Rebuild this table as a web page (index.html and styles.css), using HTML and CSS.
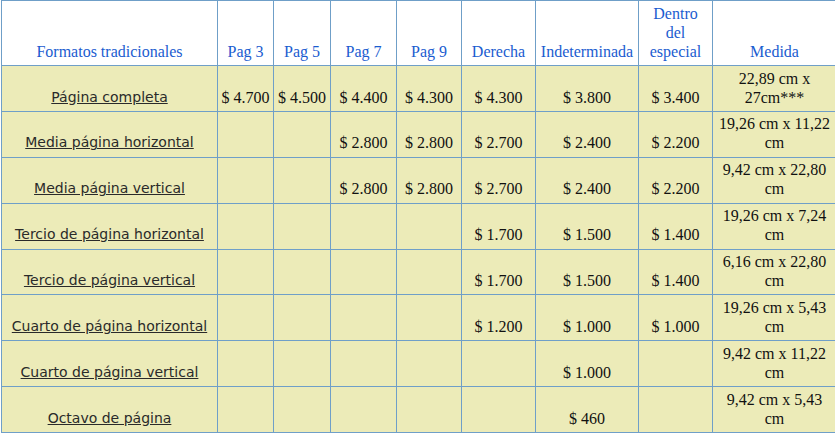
FILE: index.html
```html
<!DOCTYPE html>
<html lang="es">
<head>
<meta charset="utf-8">
<title>Formatos tradicionales</title>
<link rel="stylesheet" href="styles.css">
</head>
<body>
<table class="tarifas">
  <colgroup>
    <col class="c-formato">
    <col class="c-p3">
    <col class="c-p5">
    <col class="c-p7">
    <col class="c-p9">
    <col class="c-der">
    <col class="c-ind">
    <col class="c-dentro">
    <col class="c-medida">
  </colgroup>
  <thead>
    <tr>
      <th>Formatos tradicionales</th>
      <th>Pag 3</th>
      <th>Pag 5</th>
      <th>Pag 7</th>
      <th>Pag 9</th>
      <th>Derecha</th>
      <th>Indeterminada</th>
      <th>Dentro<br>del<br>especial</th>
      <th>Medida</th>
    </tr>
  </thead>
  <tbody>
    <tr>
      <td class="formato"><a href="#">Página completa</a></td>
      <td>$ 4.700</td><td>$ 4.500</td><td>$ 4.400</td><td>$ 4.300</td><td>$ 4.300</td><td>$ 3.800</td><td>$ 3.400</td>
      <td>22,89 cm x 27cm***</td>
    </tr>
    <tr>
      <td class="formato"><a href="#">Media página horizontal</a></td>
      <td></td><td></td><td>$ 2.800</td><td>$ 2.800</td><td>$ 2.700</td><td>$ 2.400</td><td>$ 2.200</td>
      <td>19,26 cm x 11,22 cm</td>
    </tr>
    <tr>
      <td class="formato"><a href="#">Media página vertical</a></td>
      <td></td><td></td><td>$ 2.800</td><td>$ 2.800</td><td>$ 2.700</td><td>$ 2.400</td><td>$ 2.200</td>
      <td>9,42 cm x 22,80 cm</td>
    </tr>
    <tr>
      <td class="formato"><a href="#">Tercio de página horizontal</a></td>
      <td></td><td></td><td></td><td></td><td>$ 1.700</td><td>$ 1.500</td><td>$ 1.400</td>
      <td>19,26 cm x 7,24 cm</td>
    </tr>
    <tr>
      <td class="formato"><a href="#">Tercio de página vertical</a></td>
      <td></td><td></td><td></td><td></td><td>$ 1.700</td><td>$ 1.500</td><td>$ 1.400</td>
      <td>6,16 cm x 22,80 cm</td>
    </tr>
    <tr>
      <td class="formato"><a href="#">Cuarto de página horizontal</a></td>
      <td></td><td></td><td></td><td></td><td>$ 1.200</td><td>$ 1.000</td><td>$ 1.000</td>
      <td>19,26 cm x 5,43 cm</td>
    </tr>
    <tr>
      <td class="formato"><a href="#">Cuarto de página vertical</a></td>
      <td></td><td></td><td></td><td></td><td></td><td>$ 1.000</td><td></td>
      <td>9,42 cm x 11,22 cm</td>
    </tr>
    <tr>
      <td class="formato"><a href="#">Octavo de página</a></td>
      <td></td><td></td><td></td><td></td><td></td><td>$ 460</td><td></td>
      <td>9,42 cm x 5,43 cm</td>
    </tr>
  </tbody>
</table>
</body>
</html>
```

FILE: styles.css
```css
html, body {
  margin: 0;
  padding: 0;
  background: #ffffff;
}

.tarifas {
  margin-left: 1px;
  border-collapse: separate;
  border-spacing: 0;
  table-layout: fixed;
  width: 835px;
  border-top: 1px solid #6f9fc8;
  border-left: 1px solid #6f9fc8;
  font-family: "Liberation Serif", "Times New Roman", serif;
  font-size: 16px;
  color: #111111;
}

.c-formato { width: 216px; }
.c-p3 { width: 56px; }
.c-p5 { width: 57px; }
.c-p7 { width: 66px; }
.c-p9 { width: 65px; }
.c-der { width: 74px; }
.c-ind { width: 103px; }
.c-dentro { width: 74px; }
.c-medida { width: 124px; }

.tarifas th,
.tarifas td {
  box-sizing: border-box;
  border-right: 1px solid #6f9fc8;
  border-bottom: 1px solid #6f9fc8;
  text-align: center;
  vertical-align: bottom;
  line-height: 19px;
}

.tarifas th {
  background: #ffffff;
  color: #1a5cd0;
  font-weight: normal;
  padding: 3px 3px 4px;
}

.tarifas td {
  background: #ecebb8;
  padding: 2.5px 3px 4.375px;
}

.tarifas td.formato {
  font-family: "DejaVu Sans", Verdana, sans-serif;
  font-size: 14px;
}

.tarifas td.formato a {
  color: #2a2a2a;
  text-decoration: underline;
}
```
